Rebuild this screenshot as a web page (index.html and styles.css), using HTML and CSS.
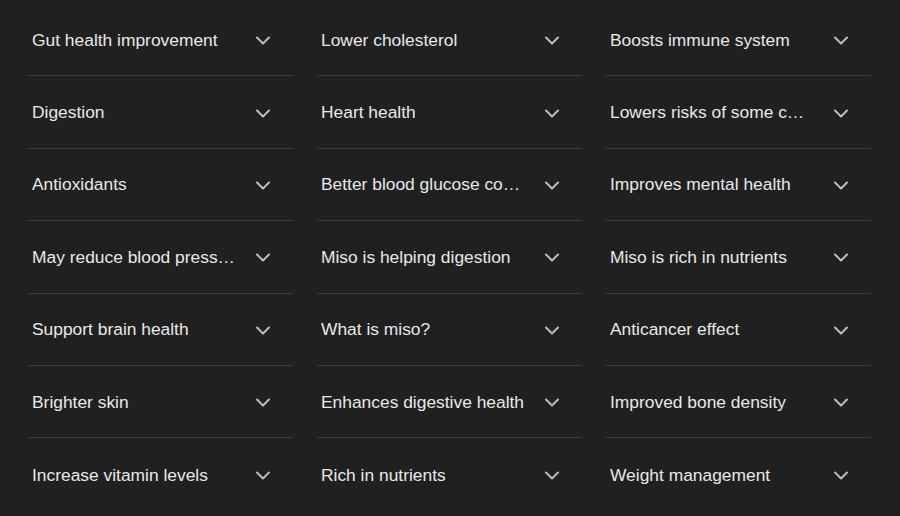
FILE: index.html
```html
<!DOCTYPE html>
<html>
<head>
<meta charset="utf-8">
<link rel="stylesheet" href="styles.css">
</head>
<body>
<div class="grid">
  <div class="col">
    <div class="item"><span class="label">Gut health improvement</span><svg class="chev" viewBox="0 0 24 24"><path d="M6 9.5l6 6 6-6"/></svg></div>
    <div class="item"><span class="label">Digestion</span><svg class="chev" viewBox="0 0 24 24"><path d="M6 9.5l6 6 6-6"/></svg></div>
    <div class="item"><span class="label">Antioxidants</span><svg class="chev" viewBox="0 0 24 24"><path d="M6 9.5l6 6 6-6"/></svg></div>
    <div class="item"><span class="label">May reduce blood pressure</span><svg class="chev" viewBox="0 0 24 24"><path d="M6 9.5l6 6 6-6"/></svg></div>
    <div class="item"><span class="label">Support brain health</span><svg class="chev" viewBox="0 0 24 24"><path d="M6 9.5l6 6 6-6"/></svg></div>
    <div class="item"><span class="label">Brighter skin</span><svg class="chev" viewBox="0 0 24 24"><path d="M6 9.5l6 6 6-6"/></svg></div>
    <div class="item"><span class="label">Increase vitamin levels</span><svg class="chev" viewBox="0 0 24 24"><path d="M6 9.5l6 6 6-6"/></svg></div>
  </div>
  <div class="col">
    <div class="item"><span class="label">Lower cholesterol</span><svg class="chev" viewBox="0 0 24 24"><path d="M6 9.5l6 6 6-6"/></svg></div>
    <div class="item"><span class="label">Heart health</span><svg class="chev" viewBox="0 0 24 24"><path d="M6 9.5l6 6 6-6"/></svg></div>
    <div class="item"><span class="label">Better blood glucose control</span><svg class="chev" viewBox="0 0 24 24"><path d="M6 9.5l6 6 6-6"/></svg></div>
    <div class="item"><span class="label">Miso is helping digestion</span><svg class="chev" viewBox="0 0 24 24"><path d="M6 9.5l6 6 6-6"/></svg></div>
    <div class="item"><span class="label">What is miso?</span><svg class="chev" viewBox="0 0 24 24"><path d="M6 9.5l6 6 6-6"/></svg></div>
    <div class="item"><span class="label">Enhances digestive health</span><svg class="chev" viewBox="0 0 24 24"><path d="M6 9.5l6 6 6-6"/></svg></div>
    <div class="item"><span class="label">Rich in nutrients</span><svg class="chev" viewBox="0 0 24 24"><path d="M6 9.5l6 6 6-6"/></svg></div>
  </div>
  <div class="col">
    <div class="item"><span class="label">Boosts immune system</span><svg class="chev" viewBox="0 0 24 24"><path d="M6 9.5l6 6 6-6"/></svg></div>
    <div class="item"><span class="label">Lowers risks of some cancers</span><svg class="chev" viewBox="0 0 24 24"><path d="M6 9.5l6 6 6-6"/></svg></div>
    <div class="item"><span class="label">Improves mental health</span><svg class="chev" viewBox="0 0 24 24"><path d="M6 9.5l6 6 6-6"/></svg></div>
    <div class="item"><span class="label">Miso is rich in nutrients</span><svg class="chev" viewBox="0 0 24 24"><path d="M6 9.5l6 6 6-6"/></svg></div>
    <div class="item"><span class="label">Anticancer effect</span><svg class="chev" viewBox="0 0 24 24"><path d="M6 9.5l6 6 6-6"/></svg></div>
    <div class="item"><span class="label">Improved bone density</span><svg class="chev" viewBox="0 0 24 24"><path d="M6 9.5l6 6 6-6"/></svg></div>
    <div class="item"><span class="label">Weight management</span><svg class="chev" viewBox="0 0 24 24"><path d="M6 9.5l6 6 6-6"/></svg></div>
  </div>
</div>
</body>
</html>
```
FILE: styles.css
```css
html, body {
  margin: 0;
  padding: 0;
  background: #202020;
  height: 100%;
  overflow: hidden;
}
body {
  font-family: "Liberation Sans", Arial, Helvetica, sans-serif;
  color: #e8e8e8;
}
.grid {
  display: grid;
  grid-template-columns: 265px 265px 265px;
  column-gap: 24px;
  padding: 4px 0 0 28px;
}
.col {
  display: flex;
  flex-direction: column;
}
.item {
  display: flex;
  align-items: center;
  box-sizing: border-box;
  height: 72.4px;
  border-bottom: 1px solid #3c3c3c;
  padding: 1px 18px 0 4px;
}
.item:last-child {
  border-bottom: none;
}
.label {
  flex: 0 0 auto;
  width: 203.5px;
  font-size: 17.4px;
  white-space: nowrap;
  overflow: hidden;
  text-overflow: ellipsis;
}
.chev {
  margin-left: auto;
  width: 24px;
  height: 24px;
  fill: none;
  stroke: #bdbdbd;
  stroke-width: 2;
  stroke-linecap: round;
  stroke-linejoin: round;
}
```
